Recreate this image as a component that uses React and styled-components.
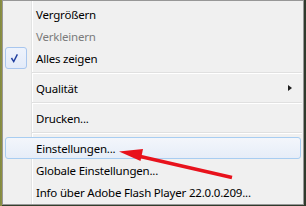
import React from "react";
import styled, { createGlobalStyle } from "styled-components";

const Global = createGlobalStyle`
  html, body {
    margin: 0;
    padding: 0;
    width: 306px;
    height: 206px;
    overflow: hidden;
    background: linear-gradient(to right, #7c8a45 0px, #93903f 2px, #34402c 2px, #2f3a2c 100%);
  }
  body {
    font-family: "Noto Sans", "Open Sans", sans-serif;
  }
`;

const Page = styled.div`
  position: relative;
  width: 306px;
  height: 206px;
  display: flex;
  align-items: flex-start;
  padding-left: 2px;
  box-sizing: border-box;
`;

const Menu = styled.div`
  width: 302px;
  height: 205px;
  box-sizing: border-box;
  border: 1px solid #979797;
  padding: 2px 2px 1px 2px;
  display: flex;
  flex-direction: column;
  background:
    linear-gradient(
      to right,
      transparent 28px,
      #e2e3e3 28px,
      #e2e3e3 29px,
      #ffffff 29px,
      #ffffff 30px,
      transparent 30px
    ),
    #f0f0f0;
`;

const Item = styled.div`
  position: relative;
  height: 22px;
  flex: none;
  display: flex;
  align-items: center;
  box-sizing: border-box;
  padding-left: 30px;
  font-size: 11.5px;
  letter-spacing: -0.2px;
  color: ${(p) => (p.$disabled ? "#7b7b7b" : "#000")};
  border: 1px solid ${(p) => (p.$active ? "#a8cdf1" : "transparent")};
  border-radius: 3px;
  background: ${(p) =>
    p.$active ? "linear-gradient(to bottom, #f3f6fb, #e6edf8)" : "transparent"};
  white-space: nowrap;
`;

const CheckBox = styled.span`
  position: absolute;
  left: -1px;
  top: -1px;
  width: 22px;
  height: 22px;
  box-sizing: border-box;
  border: 1px solid #a8c6ee;
  border-radius: 3px;
  background: linear-gradient(to bottom, #eef3fc, #e3ebf9);
  display: flex;
  align-items: center;
  justify-content: center;
`;

const SubArrow = styled.span`
  position: absolute;
  right: 8px;
  top: 7px;
  width: 0;
  height: 0;
  border-top: 3.5px solid transparent;
  border-bottom: 3.5px solid transparent;
  border-left: 4px solid #1e1e1e;
`;

const Separator = styled.div`
  height: 8px;
  flex: none;
  margin-left: 27px;
  margin-right: -1px;
  display: flex;
  flex-direction: column;
  justify-content: center;
  &::before {
    content: "";
    display: block;
    height: 1px;
    background: #e0e0e0;
  }
  &::after {
    content: "";
    display: block;
    height: 1px;
    background: #ffffff;
  }
`;

const Overlay = styled.svg`
  position: absolute;
  left: 0;
  top: 0;
  pointer-events: none;
`;

export default function App() {
  return (
    <>
      <Global />
      <Page>
        <Menu>
          <Item>Vergrößern</Item>
          <Item $disabled>Verkleinern</Item>
          <Item>
            <CheckBox>
              <svg width="22" height="22" viewBox="0 0 22 22">
                <path
                  d="M6 11 L8.5 15 L12.5 7"
                  fill="none"
                  stroke="#2140a0"
                  strokeWidth="1.6"
                />
              </svg>
            </CheckBox>
            Alles zeigen
          </Item>
          <Separator />
          <Item>
            Qualität
            <SubArrow />
          </Item>
          <Separator />
          <Item>Drucken...</Item>
          <Separator />
          <Item $active>Einstellungen...</Item>
          <Item>Globale Einstellungen...</Item>
          <Item>Info über Adobe Flash Player 22.0.0.209...</Item>
        </Menu>
        <Overlay width="306" height="206" viewBox="0 0 306 206">
          <line x1="136" y1="155.5" x2="232" y2="177.5" stroke="#e8121c" strokeWidth="3.5" strokeLinecap="butt" />
          <polygon points="119,151.5 143,149 140.5,161" fill="#e8121c" />
        </Overlay>
      </Page>
    </>
  );
}
